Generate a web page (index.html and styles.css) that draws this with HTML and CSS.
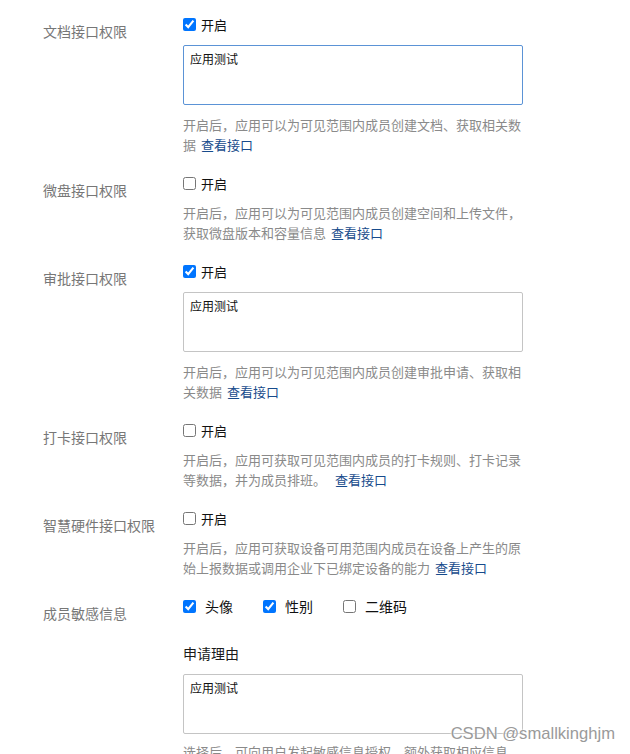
FILE: index.html
```html
<!DOCTYPE html>
<html lang="zh-CN">
<head>
<meta charset="utf-8">
<title>接口权限</title>
<link rel="stylesheet" href="styles.css">
</head>
<body>
<div class="form">
  <div class="row">
    <div class="label">文档接口权限</div>
    <div class="field">
      <label class="check"><input type="checkbox" checked><span>开启</span></label>
      <div class="textarea focus">应用测试</div>
      <p class="desc"><span class="line1">开启后，应用可以为可见范围内成员创建文档、获取相关数</span>据 <a class="link">查看接口</a></p>
    </div>
  </div>
  <div class="row">
    <div class="label">微盘接口权限</div>
    <div class="field">
      <label class="check"><input type="checkbox"><span>开启</span></label>
      <p class="desc"><span class="line1">开启后，应用可以为可见范围内成员创建空间和上传文件，</span>获取微盘版本和容量信息 <a class="link">查看接口</a></p>
    </div>
  </div>
  <div class="row">
    <div class="label">审批接口权限</div>
    <div class="field">
      <label class="check"><input type="checkbox" checked><span>开启</span></label>
      <div class="textarea">应用测试</div>
      <p class="desc"><span class="line1">开启后，应用可以为可见范围内成员创建审批申请、获取相</span>关数据 <a class="link">查看接口</a></p>
    </div>
  </div>
  <div class="row">
    <div class="label">打卡接口权限</div>
    <div class="field">
      <label class="check"><input type="checkbox"><span>开启</span></label>
      <p class="desc"><span class="line1">开启后，应用可获取可见范围内成员的打卡规则、打卡记录</span>等数据，并为成员排班。 <a class="link wide-gap">查看接口</a></p>
    </div>
  </div>
  <div class="row">
    <div class="label">智慧硬件接口权限</div>
    <div class="field">
      <label class="check"><input type="checkbox"><span>开启</span></label>
      <p class="desc"><span class="line1">开启后，应用可获取设备可用范围内成员在设备上产生的原</span>始上报数据或调用企业下已绑定设备的能力 <a class="link">查看接口</a></p>
    </div>
  </div>
  <div class="row">
    <div class="label">成员敏感信息</div>
    <div class="field">
      <div class="checks">
        <label class="check wide"><input type="checkbox" checked><span>头像</span></label>
        <label class="check wide"><input type="checkbox" checked><span>性别</span></label>
        <label class="check wide"><input type="checkbox"><span>二维码</span></label>
      </div>
      <div class="subtitle">申请理由</div>
      <div class="textarea">应用测试</div>
      <p class="desc last">选择后，可向用户发起敏感信息授权，额外获取相应信息</p>
    </div>
  </div>
</div>
<div class="watermark">CSDN @smallkinghjm</div>
</body>
</html>
```

FILE: styles.css
```css
html, body {
  margin: 0;
  padding: 0;
  background: #fff;
  overflow: hidden;
}
body {
  font-family: "Noto Sans CJK SC", "Noto Sans", sans-serif;
  height: 754px;
  position: relative;
}
.form {
  padding: 14px 0 0 43px;
  display: flex;
  flex-direction: column;
  gap: 18px;
}
.row {
  display: flex;
}
.label {
  width: 140px;
  flex: none;
  font-size: 14px;
  line-height: 20px;
  padding-top: 7px;
  color: #777;
}
.field {
  width: 340px;
  display: flex;
  flex-direction: column;
}
.check {
  display: flex;
  align-items: center;
  height: 20px;
  font-size: 13px;
  color: #111;
}
.check input {
  margin: 0 5px 0 0;
  width: 13px;
  height: 13px;
}
.check.wide {
  width: 80px;
  font-size: 14px;
}
.check.wide input {
  margin-right: 9px;
}
.checks {
  display: flex;
}
.textarea {
  margin-top: 11px;
  box-sizing: border-box;
  height: 60px;
  border: 1px solid #c4c4c4;
  border-radius: 2px;
  padding: 4px 6px;
  font-size: 12px;
  line-height: 17px;
  color: #111;
}
.textarea.focus {
  border-color: #5b93d6;
}
.desc {
  width: 337px;
  margin: 10px 0 0;
  font-size: 13px;
  line-height: 20px;
  color: #8a8a8a;
}
.line1 {
  display: block;
  white-space: nowrap;
  text-align: justify;
  text-align-last: justify;
}
.desc.last {
  margin-top: 8px;
  white-space: nowrap;
}
.link {
  color: #174b8c;
  cursor: pointer;
  margin-left: 2px;
}
.link.wide-gap {
  margin-left: 6px;
}
.subtitle {
  margin-top: 27px;
  font-size: 14px;
  line-height: 20px;
  color: #1a1a1a;
}
.watermark {
  position: absolute;
  right: 15px;
  top: 724px;
  font-family: "Liberation Sans", Arial, sans-serif;
  font-size: 16.6px;
  color: #9a9a9a;
  text-shadow: 0 0 2px #fff, 0 0 2px #fff;
}
```
